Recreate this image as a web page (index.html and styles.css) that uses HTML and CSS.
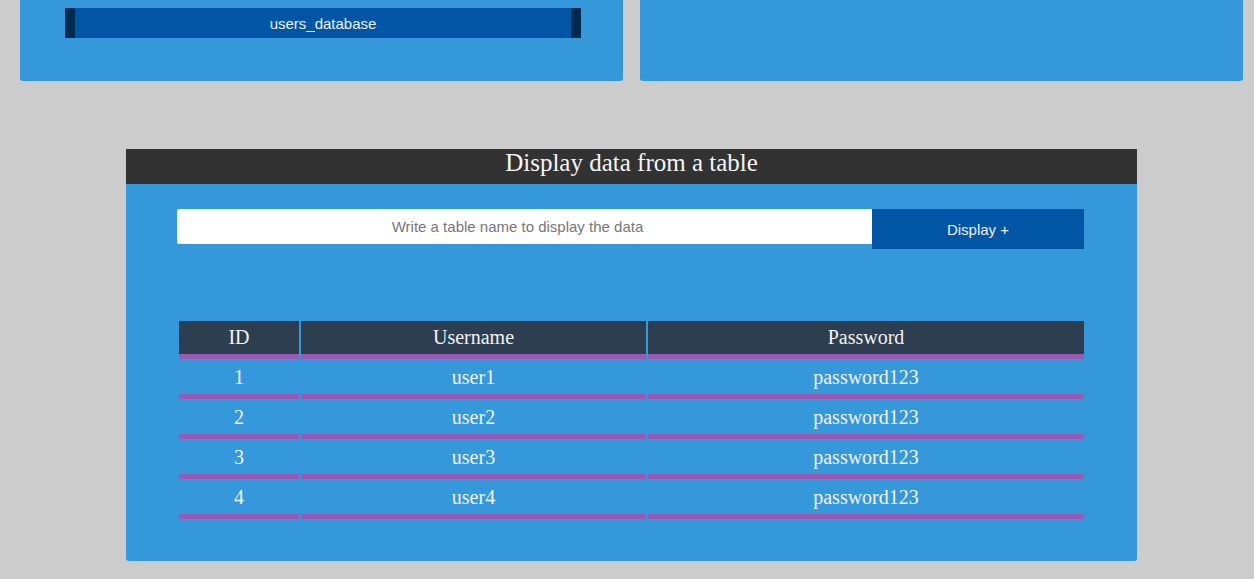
FILE: index.html
```html
<!DOCTYPE html>
<html>
<head>
<meta charset="utf-8">
<link rel="stylesheet" href="styles.css">
</head>
<body>
<div class="top-row">
  <div class="card">
    <div class="db-item">users_database</div>
  </div>
  <div class="card"></div>
</div>
<div class="panel">
  <h2 class="panel-title">Display data from a table</h2>
  <div class="form">
    <input class="input" type="text" placeholder="Write a table name to display the data">
    <button class="btn">Display +</button>
  </div>
  <table class="data-table">
    <thead>
      <tr><th class="c-id">ID</th><th class="c-user">Username</th><th class="c-pass">Password</th></tr>
    </thead>
    <tbody>
      <tr><td>1</td><td>user1</td><td>password123</td></tr>
      <tr><td>2</td><td>user2</td><td>password123</td></tr>
      <tr><td>3</td><td>user3</td><td>password123</td></tr>
      <tr><td>4</td><td>user4</td><td>password123</td></tr>
    </tbody>
  </table>
</div>
</body>
</html>
```
FILE: styles.css
```css
html, body {
  margin: 0;
  padding: 0;
  background: #cccccc;
  font-family: "Liberation Sans", Arial, sans-serif;
}
.top-row {
  display: flex;
  gap: 17px;
  padding-left: 20px;
}
.card {
  box-sizing: border-box;
  width: 603px;
  height: 81px;
  background: #3498db;
  border-radius: 0 0 3px 3px;
  padding: 8px 42px 0 45px;
}
.db-item {
  box-sizing: border-box;
  height: 30px;
  padding-top: 1px;
  background: #0056a4;
  border-left: 10px solid #002b50;
  border-right: 10px solid #002b50;
  color: #f0f0f0;
  font-size: 15px;
  line-height: 29px;
  text-align: center;
}
.panel {
  width: 1011px;
  margin: 68px 0 0 126px;
  background: #3498db;
  border-radius: 0 0 3px 3px;
  padding-bottom: 42px;
}
.panel-title {
  margin: 0;
  height: 35px;
  background: #323232;
  color: #f5f5f5;
  font-family: "Liberation Serif", "Times New Roman", serif;
  font-weight: normal;
  font-size: 25px;
  line-height: 27px;
  text-align: center;
}
.form {
  display: flex;
  align-items: flex-start;
  margin-top: 25px;
  padding-left: 51px;
}
.input {
  box-sizing: border-box;
  width: 695px;
  height: 35px;
  border: none;
  border-radius: 2px 0 0 2px;
  background: #ffffff;
  font-family: "Liberation Sans", Arial, sans-serif;
  font-size: 15px;
  text-align: center;
  padding: 0 14px 0 0;
  outline: none;
}
.input::placeholder {
  color: #777777;
}
.btn {
  width: 212px;
  height: 40px;
  border: none;
  background: #0056a4;
  color: #f0f0f0;
  font-family: "Liberation Sans", Arial, sans-serif;
  font-size: 15px;
  padding: 0;
}
.data-table {
  margin: 72px 0 0 51px;
  border-collapse: separate;
  border-spacing: 2px 0;
  width: 909px;
  table-layout: fixed;
  font-family: "Liberation Serif", "Times New Roman", serif;
  font-size: 20px;
  color: #f3f3f3;
}
.data-table th,
.data-table td {
  padding: 0;
  text-align: center;
  border-bottom: 5px solid #9b59b6;
  font-weight: normal;
}
.data-table th {
  background: #2c3e50;
  line-height: 33px;
}
.data-table td {
  padding-top: 1px;
  line-height: 34px;
}
.c-id { width: 120px; }
.c-user { width: 345px; }
.c-pass { width: 436px; }
```
